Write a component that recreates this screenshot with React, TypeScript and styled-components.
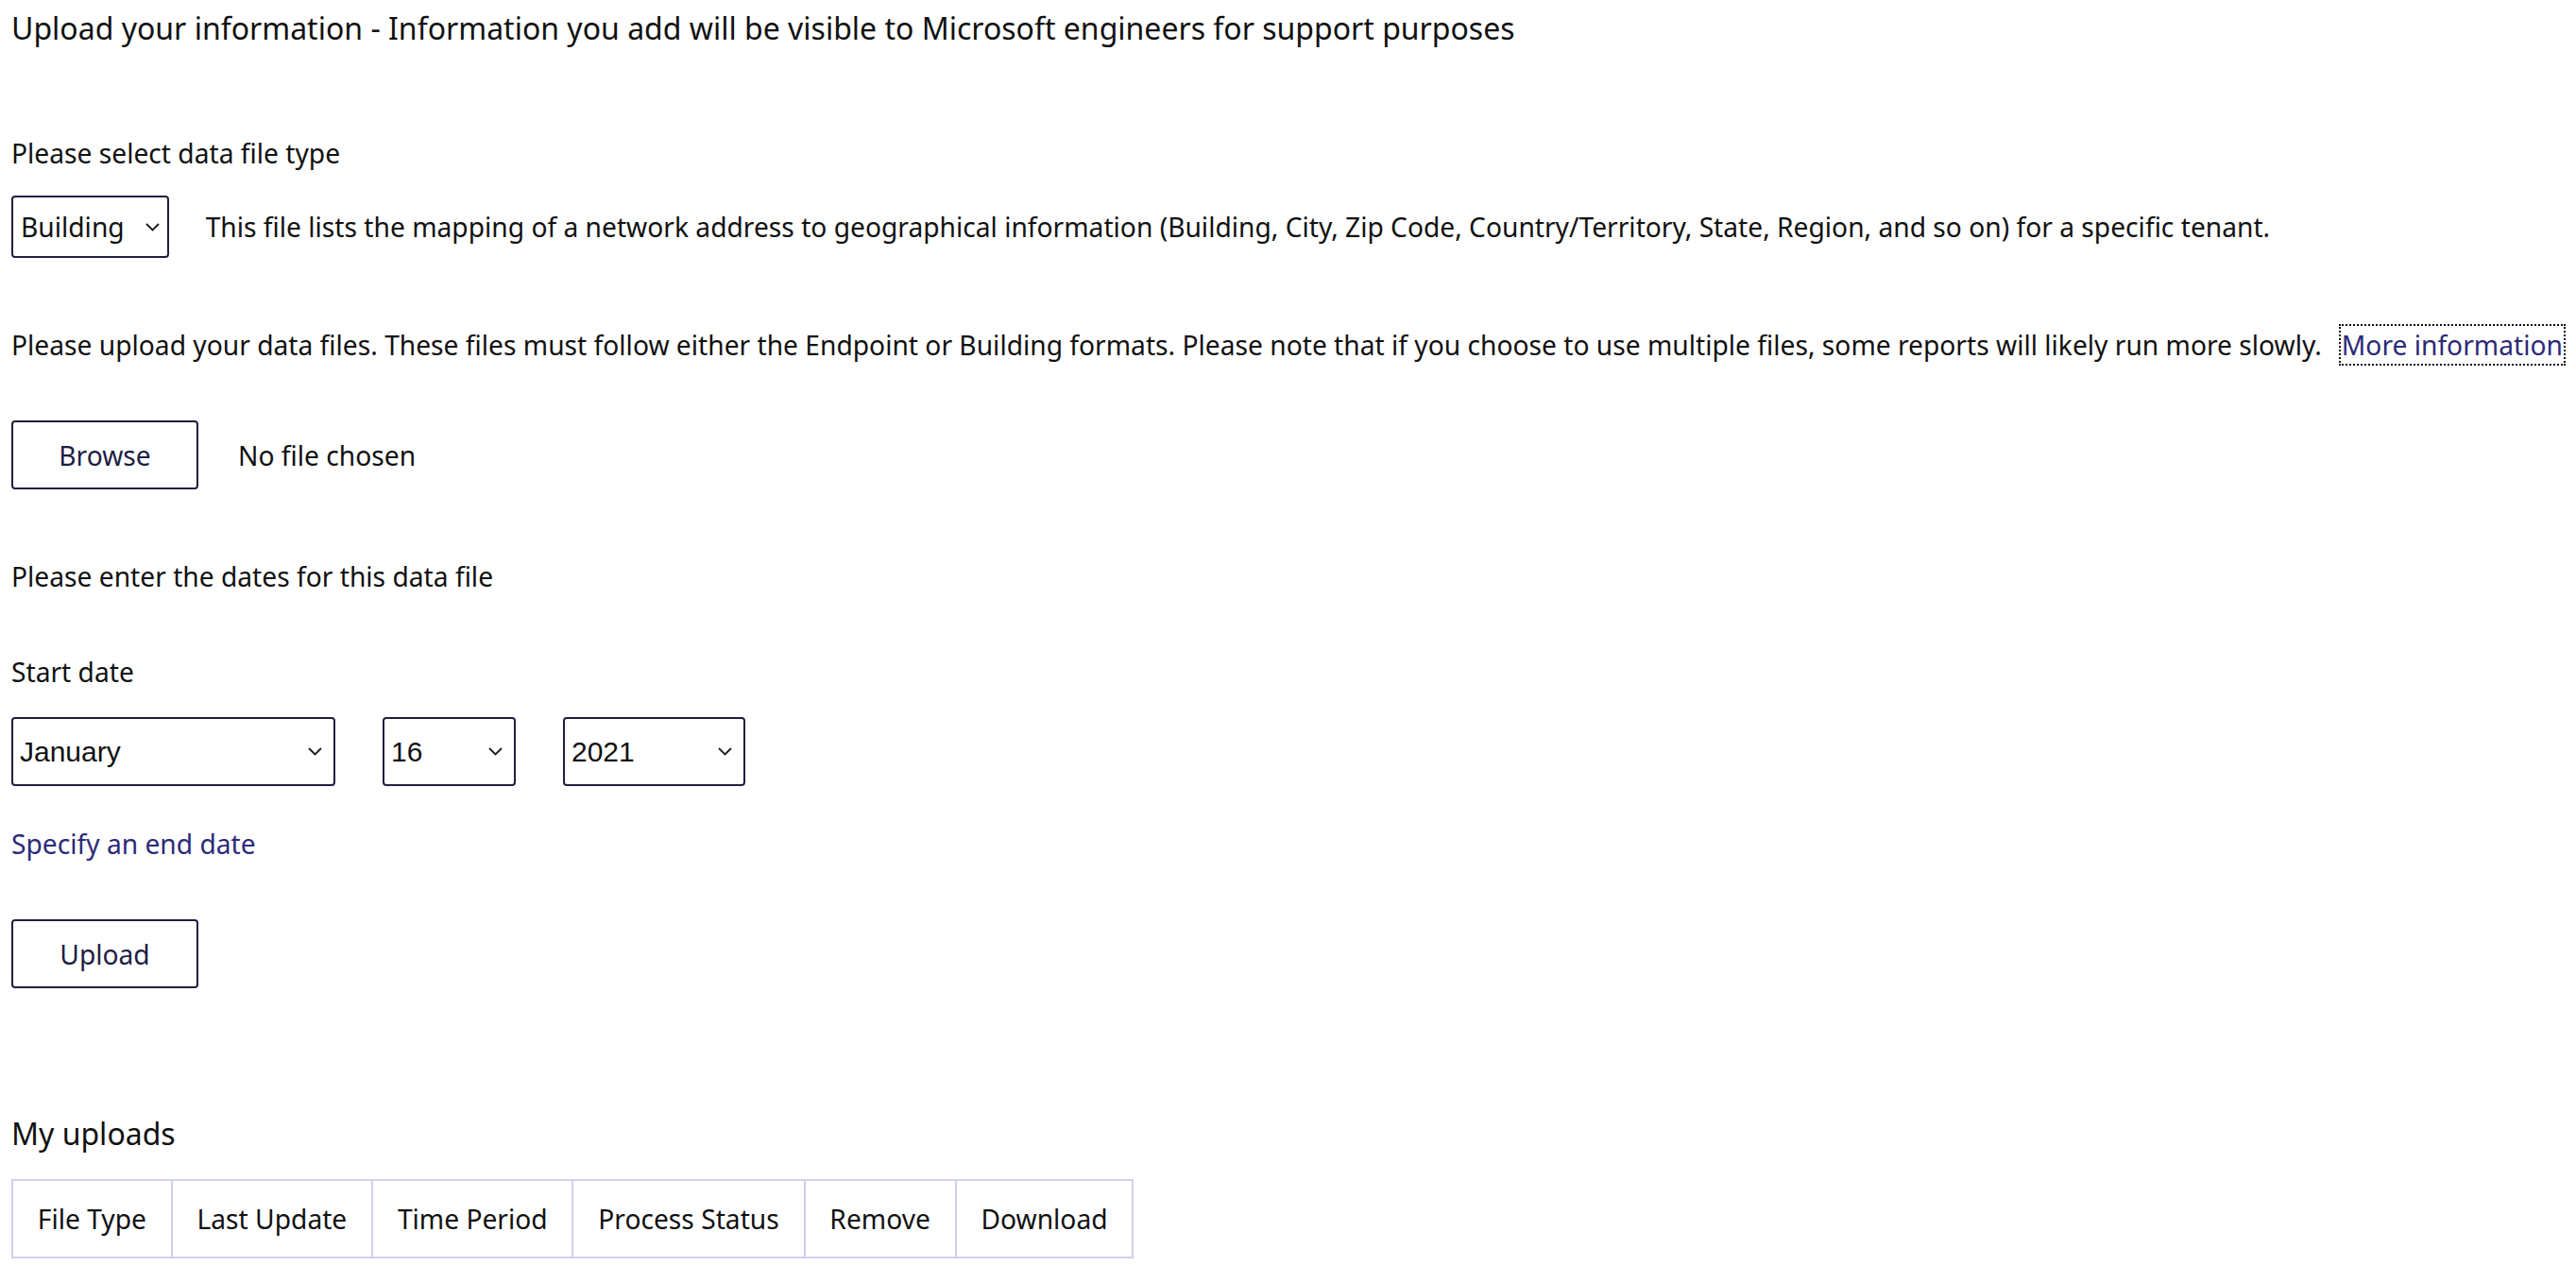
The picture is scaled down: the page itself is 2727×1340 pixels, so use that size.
import React from "react";
import styled, { createGlobalStyle } from "styled-components";

const GlobalStyle = createGlobalStyle`
  html, body { margin: 0; padding: 0; background: #ffffff; }
  body {
    font-family: "Noto Sans", "Open Sans", sans-serif;
    color: #111111;
  }
`;

const Page = styled.main`
  display: flex;
  flex-direction: column;
  align-items: flex-start;
  padding: 10px 12px 0 12px;
  font-size: 28.2px;
`;

const Heading = styled.h2<{ $mt?: number }>`
  margin: ${(p) => p.$mt ?? 0}px 0 0 0;
  font-size: 32px;
  font-weight: 400;
  line-height: 40px;
  white-space: nowrap;
`;

const Text = styled.p<{ $mt: number }>`
  margin: ${(p) => p.$mt}px 0 0 0;
  line-height: 40px;
  white-space: nowrap;
  display: flex;
  align-items: center;
`;

const Row = styled.div<{ $mt: number; $gap: number }>`
  display: flex;
  align-items: center;
  gap: ${(p) => p.$gap}px;
  margin-top: ${(p) => p.$mt}px;
  white-space: nowrap;
`;

const SelectBox = styled.div<{ $w?: number; $h: number; $arial?: boolean }>`
  box-sizing: border-box;
  display: flex;
  align-items: center;
  justify-content: space-between;
  gap: 22px;
  width: ${(p) => (p.$w ? `${p.$w}px` : "auto")};
  height: ${(p) => p.$h}px;
  padding: 0 ${(p) => (p.$arial ? 12 : 8)}px 0 ${(p) => (p.$arial ? 7 : 8)}px;
  border: 2px solid #1f1e3f;
  border-radius: 4px;
  background: #ffffff;
  color: #111111;
  font-family: ${(p) =>
    p.$arial ? `"Liberation Sans", Arial, sans-serif` : `"Noto Sans", sans-serif`};
  font-size: ${(p) => (p.$arial ? 30 : 28.2)}px;
  cursor: default;
`;

const Chevron = styled.svg`
  width: 15px;
  height: 9px;
  flex: none;
`;

const Button = styled.button`
  box-sizing: border-box;
  width: 198px;
  height: 73px;
  border: 2px solid #1f1e3f;
  border-radius: 4px;
  background: #ffffff;
  color: #1e1d45;
  font-family: "Noto Sans", sans-serif;
  font-size: 28.2px;
  padding: 0;
  cursor: pointer;
`;

const Link = styled.a<{ $outlined?: boolean }>`
  color: #2c2a78;
  text-decoration: none;
  line-height: 40px;
  ${(p) =>
    p.$outlined &&
    `
    display: inline-block;
    margin-left: 20px;
    padding: 0 1px;
    outline: 2px dotted #111111;
    outline-offset: 0px;
  `}
`;

const Table = styled.table`
  margin-top: 28px;
  border-collapse: collapse;
  border: 2px solid #cfd0ee;
`;

const Th = styled.th`
  border: 2px solid #cfd0ee;
  padding: 20px 25.8px;
  font-weight: 400;
  line-height: 40px;
  white-space: nowrap;
  text-align: center;
`;

function ChevronIcon() {
  return (
    <Chevron viewBox="0 0 15 9" aria-hidden="true">
      <path d="M1 1 L7.5 7.5 L14 1" fill="none" stroke="#1a1a1a" strokeWidth="1.8" />
    </Chevron>
  );
}

function Select({ value, width, height, arial }: { value: string; width?: number; height: number; arial?: boolean }) {
  return (
    <SelectBox role="combobox" $w={width} $h={height} $arial={arial}>
      <span>{value}</span>
      <ChevronIcon />
    </SelectBox>
  );
}

const columns = ["File Type", "Last Update", "Time Period", "Process Status", "Remove", "Download"];

export default function App() {
  return (
    <>
      <GlobalStyle />
      <Page>
        <Heading>
          Upload your information - Information you add will be visible to Microsoft engineers for support purposes
        </Heading>

        <Text $mt={92}>Please select data file type</Text>
        <Row $mt={25} $gap={39}>
          <Select value="Building" height={66} />
          <span>
            This file lists the mapping of a network address to geographical information (Building, City, Zip Code,
            Country/Territory, State, Region, and so on) for a specific tenant.
          </span>
        </Row>

        <Text $mt={72}>
          Please upload your data files. These files must follow either the Endpoint or Building formats. Please note
          that if you choose to use multiple files, some reports will likely run more slowly.
          <Link href="#" $outlined>
            More information
          </Link>
        </Text>

        <Row $mt={60} $gap={42}>
          <Button type="button">Browse</Button>
          <span>No file chosen</span>
        </Row>

        <Text $mt={72}>Please enter the dates for this data file</Text>
        <Text $mt={61}>Start date</Text>
        <Row $mt={28} $gap={50}>
          <Select value="January" width={343} height={73} arial />
          <Select value="16" width={141} height={73} arial />
          <Select value="2021" width={193} height={73} arial />
        </Row>

        <Text $mt={41}>
          <Link href="#">Specify an end date</Link>
        </Text>

        <Row $mt={60} $gap={0}>
          <Button type="button">Upload</Button>
        </Row>

        <Heading $mt={134}>My uploads</Heading>
        <Table>
          <thead>
            <tr>
              {columns.map((c) => (
                <Th key={c}>{c}</Th>
              ))}
            </tr>
          </thead>
        </Table>
      </Page>
    </>
  );
}
